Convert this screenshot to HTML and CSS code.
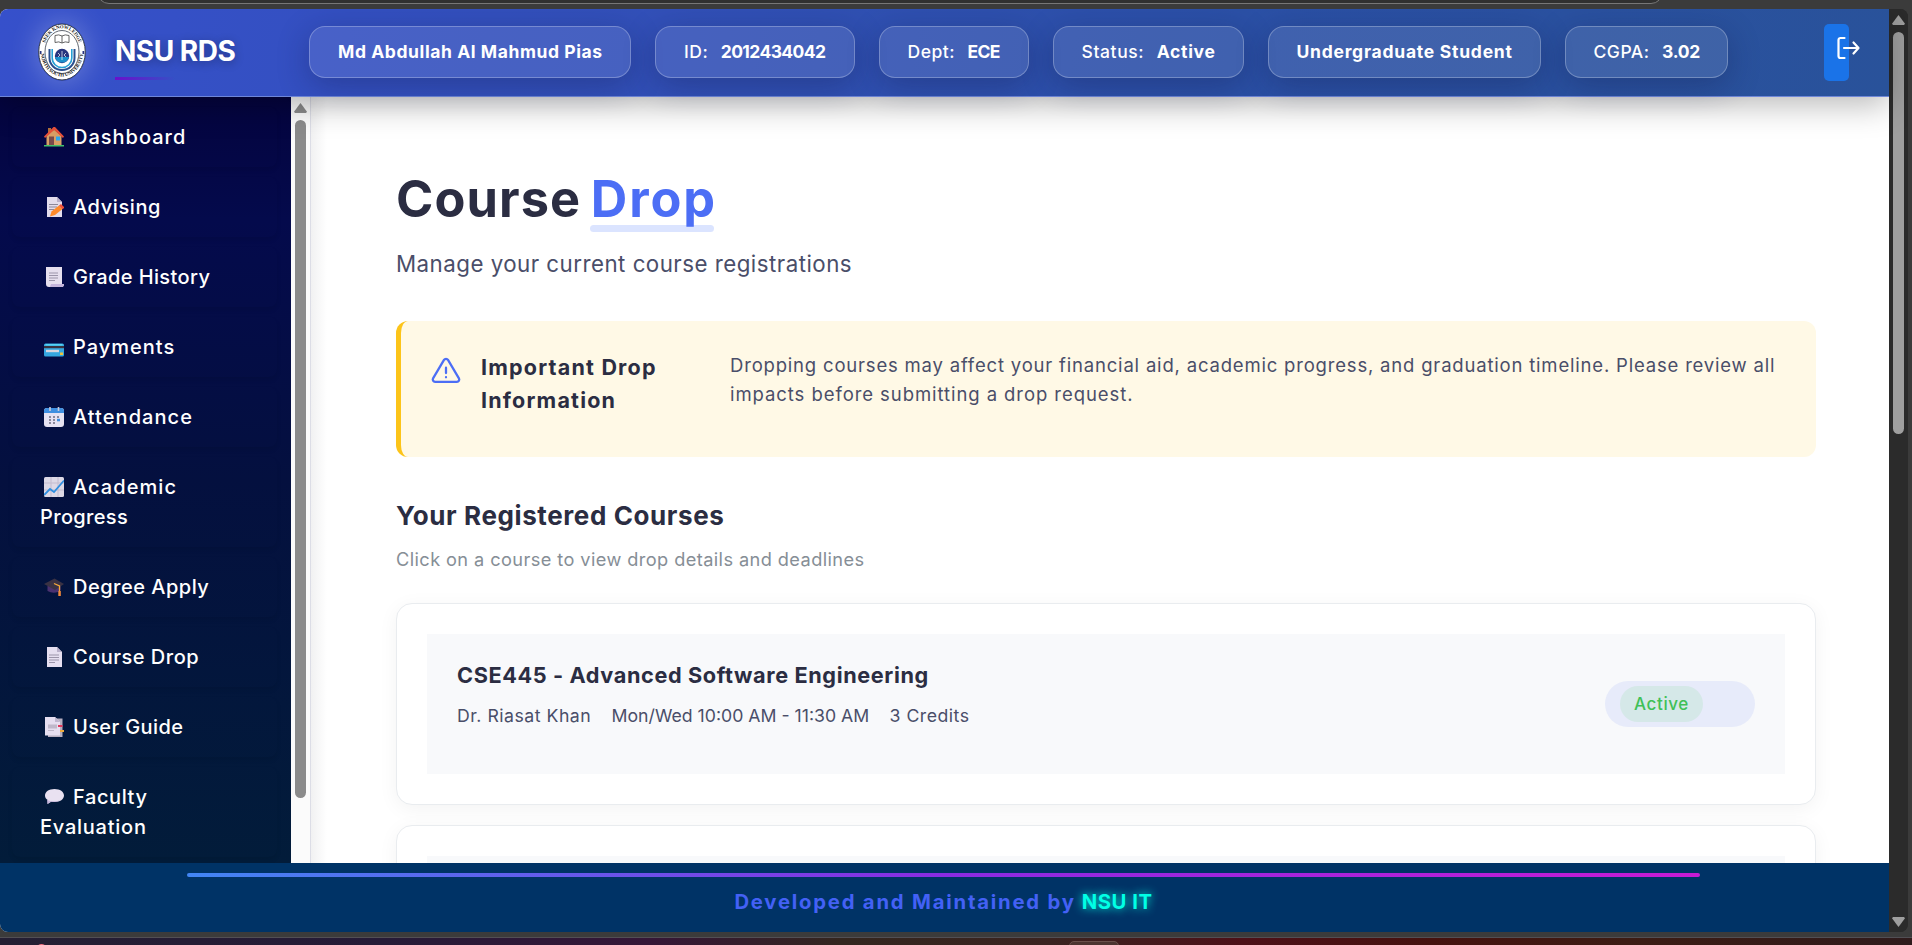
FILE: index.html
```html
<!DOCTYPE html>
<html lang="en">
<head>
<meta charset="utf-8">
<title>NSU RDS - Course Drop</title>
<link rel="stylesheet" href="styles.css">
</head>
<body>
<div class="desktop">
  <div class="chrome-top"><div class="address-bar"></div></div>
  <div class="window">
    <div class="page">
      <header class="topbar">
        <svg class="logo" width="48" height="58" viewBox="0 0 48 58">
          <ellipse cx="24" cy="29" rx="23.3" ry="28" fill="#fff" stroke="#39404d" stroke-width="1"/>
          <ellipse cx="24" cy="29" rx="17" ry="21.5" fill="none" stroke="#39404d" stroke-width=".8"/>
          <path id="arcTop" d="M6 28A18 22.6 0 0 1 42 28" fill="none"/>
          <path id="arcBottom" d="M2.8 31A21.4 26 0 0 0 45.2 31" fill="none"/>
          <text class="seal"><textPath href="#arcTop" startOffset="50%" text-anchor="middle">SEEK KNOWLEDGE</textPath></text>
          <text class="seal"><textPath href="#arcBottom" startOffset="50%" text-anchor="middle">NORTH SOUTH UNIVERSITY</textPath></text>
          <path d="M17 12.500q4-1.500 7 .5 3-2 7-.5v7q-4-1.500-7 .5-3-2-7-.5zM24 13v7" fill="#fff" stroke="#555" stroke-width=".9"/>
          <path d="M11.500 26v9a12.500 12 0 0 0 25 0v-9" fill="none" stroke="#2a4f8f" stroke-width="2"/>
          <path d="M14.200 26v9a9.800 9.500 0 0 0 19.600 0v-9" fill="none" stroke="#27a0d6" stroke-width="1.600"/>
          <circle cx="24" cy="33" r="7.200" fill="#29357f"/>
          <path d="M17 34h14a7.200 7.200 0 0 1-14 0z" fill="#1d8fcb"/>
          <path d="M20 30l2 2-2 2M24 28v9M28 30l-2 2 2 2" stroke="#fff" stroke-width=".7" fill="none"/>
          <path d="M2.600 28v3M45.400 28v3" stroke="#29357f" stroke-width="1.800"/>
        </svg>
        <div class="brand">NSU RDS</div>
        <div class="pills">
          <div class="pill p1"><b>Md Abdullah Al Mahmud Pias</b></div>
          <div class="pill p2"><span>ID:</span><b>2012434042</b></div>
          <div class="pill p3"><span>Dept:</span><b>ECE</b></div>
          <div class="pill p4"><span>Status:</span><b>Active</b></div>
          <div class="pill p5"><b>Undergraduate Student</b></div>
          <div class="pill p6"><span>CGPA:</span><b>3.02</b></div>
        </div>
        <div class="logout">
          <svg width="24" height="24" viewBox="0 0 24 24" fill="none" stroke="#fff" stroke-width="2.200" stroke-linecap="round" stroke-linejoin="round"><path d="M8.500 2H4.500a2 2 0 0 0-2 2v16a2 2 0 0 0 2 2h4M8 12h14M17.500 6.500L22.500 12l-5 5.500"/></svg>
        </div>
      </header>

      <div class="body">
        <nav class="sidebar">
          <a class="item"><svg class="ico" viewBox="0 0 20 20"><path d="M4 1h3v6H4z" fill="#b0703c"/><path d="M2.500 9L10 2.500 17.500 9v9.500h-15z" fill="#d9a066"/><path d="M0 9.500L9.500 0h1.500L20 9.500l-1 1.500L10.200 3 1 11z" fill="#e8503a"/><path d="M5 9.500h5V18H5z" fill="#7a4a4a"/><path d="M12 9.500h4v4h-4z" fill="#2fa8ee"/><path d="M0 18h20v1.500H0z" fill="#43c06a"/></svg><span>Dashboard</span></a>
          <a class="item"><svg class="ico" viewBox="0 0 20 20"><path d="M3 0h10l5 5v15H3z" fill="#e3dcec"/><path d="M13 0l5 5h-5z" fill="#b9b0ca"/><path d="M5 7.500h9M5 10h8M5 12.500h5" stroke="#8d8799"/><path d="M6 19.500l1.500-5L15 8.500l3.500 3.500-7.500 6z" fill="#ff8a2b"/><path d="M15 8.500l2-1.500 3.500 3.500-2 1.800z" fill="#f0503c"/></svg><span>Advising</span></a>
          <a class="item"><svg class="ico" viewBox="0 0 20 20"><path d="M2 0h16v17h2c0 2-1 3-2 3H5c-2 0-3-1-3-3z" fill="#e6dfee"/><path d="M7 17h13c0 2-1 3-2 3H6z" fill="#c5b5dc"/><path d="M5 6h9M5 8.500h9M5 11h9M5 13.500h6" stroke="#9c95aa"/></svg><span>Grade History</span></a>
          <a class="item"><svg class="ico" viewBox="0 0 20 20"><rect y="6.500" width="20" height="13" rx="1.500" fill="#35a7e0"/><path d="M0 9h20v2.200H0z" fill="#3a3340"/><path d="M1.500 7h17v1.500h-17z" fill="#57d3f3"/><path d="M2 12.800h13v2.400H2z" fill="#d8d6de"/><rect x="16" y="15.500" width="3" height="2.500" fill="#f0c23c"/></svg><span>Payments</span></a>
          <a class="item"><svg class="ico" viewBox="0 0 20 20"><rect y="1" width="20" height="19" rx="3" fill="#e6e2f2"/><path d="M0 6V4a3 3 0 0 1 3-3h14a3 3 0 0 1 3 3v2z" fill="#3f8fe0"/><path d="M6 0v4M14.500 0v4" stroke="#c9c9d6" stroke-width="1.600"/><path d="M5 9h2v2H5zM9 9h2v2H9zM13 9h2v2h-2zM5 12h2v2H5zM9 12h2v2H9zM5 15h2v2H5zM9 15h2v2H9z" fill="#8b899c"/><path d="M13 11.800h3v2.500h-3z" fill="#3f8fe0"/></svg><span>Attendance</span></a>
          <a class="item"><svg class="ico" viewBox="0 0 20 20"><rect width="20" height="20" rx="1.500" fill="#ddd9e6"/><path d="M0 6h20M0 13h20M7 0v20M14 0v20" stroke="#c3bccf"/><path d="M0 18l6-6 4 3L20 3.500" fill="none" stroke="#2e8fe0" stroke-width="1.800"/></svg><span>Academic</span> <em>Progress</em></a>
          <a class="item"><svg class="ico" viewBox="0 0 20 20"><path d="M3.500 9v5q5 3 10.500 1l2.500-2V8z" fill="#4a3170"/><path d="M0 7L10.500 1.500 20 7l-9 6z" fill="#3a3244"/><path d="M10 6.500l5.500 2.500v5" fill="none" stroke="#f7a93b" stroke-width="1.300"/><path d="M14.300 14h2.500v5h-2.500z" fill="#f58b3c"/></svg><span>Degree Apply</span></a>
          <a class="item"><svg class="ico" viewBox="0 0 20 20"><path d="M3 0h10l5 5v15H3z" fill="#e6dff0"/><path d="M13 0l5 5h-5z" fill="#b9b0ca"/><path d="M5 8h10M5 10.500h10M5 13h10M5 15.500h6" stroke="#9c95aa"/></svg><span>Course Drop</span></a>
          <a class="item"><svg class="ico" viewBox="0 0 20 20"><path d="M4 1.500h14.500V20H4z" fill="#b7afc0"/><path d="M1 0h10l5 5v13.500H1z" fill="#e6dff0"/><path d="M11 0l5 5h-5z" fill="#c0b7cf"/><path d="M4 7.500h9v4H4zM4 13h6v1H4z" fill="#bfb8ca"/><path d="M14 8h4.500v2H14z" fill="#e2395c"/><path d="M16 13h4v2h-4z" fill="#efab3d"/></svg><span>User Guide</span></a>
          <a class="item"><svg class="ico" viewBox="0 0 20 20"><path d="M10.500 2c5.500 0 9.500 2.800 9.500 6.500S16 15 10.500 15L7 14.800 3.500 17l.5-3.800C2 12.200 1 10.500 1 8.500 1 4.800 5 2 10.500 2z" fill="#e9e1f1"/><path d="M3 12.700c4 2 10 2 14 0-3 2.300-6.500 2.500-10 2.100L3.500 17z" fill="#c7b6dc"/></svg><span>Faculty</span> <em>Evaluation</em></a>
        </nav>
        <div class="side-scroll"><i class="up"></i><i class="thumb"></i></div>
        <main class="content">
          <h1><span class="w1">Course</span> <span class="w2">Drop</span></h1>
          <p class="lead">Manage your current course registrations</p>
          <section class="alert">
            <svg class="warn" width="32" height="32" viewBox="0 0 24 24" fill="none" stroke="#4c6ef5" stroke-width="1.700" stroke-linecap="round" stroke-linejoin="round"><path d="M10.500 3.700L2.300 17.500a1.750 1.750 0 0 0 1.500 2.600h16.400a1.750 1.750 0 0 0 1.500-2.600L13.500 3.700a1.750 1.750 0 0 0-3 0zM12 9.500v4M12 16.600v.1"/></svg>
            <h3>Important Drop<br>Information</h3>
            <p><span class="l1">Dropping courses may affect your financial aid, academic progress, and graduation timeline. Please review all</span><br><span class="l2">impacts before submitting a drop request.</span></p>
          </section>
          <h2>Your Registered Courses</h2>
          <p class="hint">Click on a course to view drop details and deadlines</p>
          <article class="card">
            <div class="course">
              <div class="info">
                <h4>CSE445 - Advanced Software Engineering</h4>
                <div class="meta"><span class="m1">Dr. Riasat Khan</span><span class="m2">Mon/Wed 10:00 AM - 11:30 AM</span><span class="m3">3 Credits</span></div>
              </div>
              <div class="status"><span>Active</span></div>
            </div>
          </article>
          <article class="card"><div class="course"></div></article>
        </main>
      </div>

      <footer class="footer">
        <div class="rule"></div>
        <p><span class="dev">Developed and Maintained by</span><span class="it">NSU IT</span></p>
      </footer>
    </div>
    <div class="page-scroll"><i class="up"></i><i class="thumb"></i><i class="down"></i></div>
  </div>
  <div class="wallpaper"><i class="dot"></i><i class="tab"></i></div>
</div>
</body>
</html>
```

FILE: styles.css
```css
*{box-sizing:border-box}
body{margin:0;font-family:Inter,"Liberation Sans",sans-serif;background:#3b3b3b;overflow:hidden}
h1,h2,h3,h4,p{margin:0}
.desktop{width:1912px;height:945px;display:flex;flex-direction:column;background:#3b3b3b;overflow:hidden}
.chrome-top{height:9px;padding-left:97px;flex:none;overflow:hidden}
.address-bar{width:1566px;height:24px;margin-top:-20px;background:#303030;border:1px solid #777;border-radius:16px}
.window{height:923px;width:1908px;flex:none;display:flex;border-radius:8px;overflow:hidden;background:#2b2b2b}
.page{width:1889px;display:flex;flex-direction:column;background:#fff}

.topbar{position:relative;z-index:2;height:88px;flex:none;display:flex;align-items:flex-start;color:#fff;
  background:linear-gradient(100deg,#3650cb 0%,#3250b8 35%,#2b50a6 65%,#29529a 100%);
  border-bottom:1px solid #6f87d8;box-shadow:0 8px 32px rgba(0,0,0,.28)}
.logo{margin:14px 0 0 38px;flex:none;overflow:visible;border-radius:50%;box-shadow:0 0 28px 2px rgba(255,255,255,.25)}
.seal{font:700 5px "Liberation Serif",serif;fill:#222;letter-spacing:-.1px}
.brand{width:195px;margin:14px 0 0 28px;height:58px;font-size:28px;font-weight:700;padding-left:1px;letter-spacing:-.5px;line-height:56px;
  text-shadow:0 2px 10px rgba(0,0,0,.3);background:linear-gradient(90deg,#6a11cb,rgba(106,17,203,0)) 1px 54px/60px 3px no-repeat}
.pills{display:flex;gap:24px;margin-top:17px}
.pill{height:52px;border:1px solid rgba(255,255,255,.26);border-radius:16px;background:rgba(255,255,255,.1);
  box-shadow:0 8px 32px rgba(20,24,70,.32);display:flex;align-items:center;gap:12.500px;padding:0 0 2px 28px;
  font-size:17.500px;font-weight:500;letter-spacing:.5px;white-space:nowrap;flex:none}
.pill b{font-weight:700}
.p1{width:322px}.p1 b{letter-spacing:.58px}
.p2{width:199.500px}.p2 b{letter-spacing:-.6px}
.p3{width:150px}.p3 b{letter-spacing:-.7px}
.p4{width:191px}.p4 span{letter-spacing:.6px}.p4 b{letter-spacing:.7px}
.p5{width:273px}.p5 b{letter-spacing:.75px}
.p6{width:163px}.p6 b{letter-spacing:-.3px}
.logout{margin:15px 0 0 96px;width:25px;height:57px;border-radius:5px;background:#1a73e8;padding:12px 0 0 12px;overflow:visible}
.logout svg{display:block;overflow:visible}

.body{height:766px;display:flex;flex:none;overflow:hidden}
.sidebar{width:291px;flex:none;padding:10px 14px 0 12px;background:linear-gradient(180deg,#04043f 0,#040a4c 16%,#04103f 50%,#021c3a 100%);
  display:flex;flex-direction:column;gap:10px;overflow:hidden}
.item{display:block;flex:none;padding:15px 28px;font-size:20px;font-weight:500;line-height:30px;letter-spacing:.6px;color:#fff;
  border-radius:8px;box-shadow:0 3px 5px rgba(0,0,0,.08)}
.item em{font-style:normal;display:block}
.item:nth-child(1),.item:nth-child(4){letter-spacing:1px}
.item:nth-child(3),.item:nth-child(9){letter-spacing:.38px}
.item:nth-child(5),.item:nth-child(6){letter-spacing:1.05px}
.item:nth-child(7),.item:nth-child(8){letter-spacing:.5px}
.item:nth-child(6) em{letter-spacing:.35px}
.item:nth-child(10) em{letter-spacing:.75px}
.ico{width:20px;height:20px;margin:0 9px 0 4px;vertical-align:-3px}
.side-scroll,.page-scroll{width:19px;flex:none;display:flex;flex-direction:column;align-items:center;background:#fbfbfb}
.side-scroll i{background:#8b8b8b}
.up{width:13px;height:10px;clip-path:polygon(50% 0,100% 88%,92% 100%,8% 100%,0 88%)}
.down{width:13px;height:10px;clip-path:polygon(50% 100%,100% 12%,92% 0,8% 0,0 12%)}
.side-scroll .up{margin-top:6px}
.side-scroll .thumb{width:11px;height:678px;margin-top:7px;border-radius:6px}
.page-scroll{background:#2b2b2b}
.page-scroll i{background:#9f9f9f}
.page-scroll .up{margin-top:6px}
.page-scroll .thumb{width:11px;height:402px;margin-top:7px;border-radius:6px}
.page-scroll .down{margin-top:auto;margin-bottom:5px}

.content{flex:1;border-left:1px solid #dcdde6;padding:70px 73px 0 85px;background:linear-gradient(90deg,#f1f1f2 0,#fff 16px);color:#2b2d42}
h1{font-size:50.500px;font-weight:700;line-height:64px;height:64px;white-space:nowrap}
.w1{letter-spacing:1.1px}
.w2{display:inline-block;letter-spacing:1.9px;color:#4c6ef5;width:124px;padding-left:1px;margin-left:-3.500px;position:relative;z-index:0}
.w2::after{content:"";position:absolute;z-index:-1;left:0;right:0;bottom:-1px;height:7px;border-radius:4px;background:#dbe4ff}
.lead{margin-top:15px;font-size:22.300px;line-height:36px;letter-spacing:.48px;color:#4a4e69}
.alert{margin-top:39px;height:136px;display:flex;background:#fff9e6;border-left:5px solid #fcc419;border-radius:12px;padding:30px 0 0 29px}
.warn{flex:none;margin:4px 0 0}
.alert h3{width:249px;margin-left:19px;flex:none;font-size:21.500px;font-weight:700;line-height:33px;letter-spacing:1.2px}
.alert p{font-size:18.500px;line-height:29px;letter-spacing:.81px;color:#4a4e69;white-space:nowrap}
.l2{letter-spacing:.93px}
h2{margin-top:39px;font-size:26px;font-weight:700;line-height:40px;letter-spacing:.6px}
.hint{margin-top:9px;font-size:18.200px;line-height:28px;letter-spacing:.41px;color:#868e96}
.card{margin-top:30px;height:202px;border:1px solid #e9ecef;border-radius:16px;background:#fff;padding:30px;box-shadow:0 4px 20px rgba(0,0,0,.05)}
.card+.card{margin-top:20px}
.course{height:140px;background:#f8f9fb;padding:24px 30px 0;display:flex;justify-content:space-between}
h4{font-size:21.700px;font-weight:700;line-height:34px;letter-spacing:.61px}
.meta{display:flex;margin-top:10px;font-size:17.700px;line-height:28px;letter-spacing:.5px;color:#4a4e69;white-space:nowrap}
.m1{width:154.500px}.m2{width:278px;letter-spacing:0}
.status{width:150px;height:46px;margin-top:23px;border-radius:23px;background:#e7ebfa;padding:5px 15px}
.status span{display:block;width:83px;height:36px;border-radius:18px;background:#d5e8e8;color:#40c057;font-size:17px;font-weight:500;line-height:36px;
  text-align:center;letter-spacing:.6px}

.footer{position:relative;z-index:2;height:69px;flex:none;background:#003366;padding:10px 2px 0 0;display:flex;flex-direction:column;align-items:center}
.rule{width:1513px;height:4px;border-radius:2px;background:linear-gradient(90deg,#4286f4,#8a2be2 50%,#c71bd4)}
.footer p{font-size:20.300px;font-weight:700;line-height:50px;white-space:nowrap}
.dev{color:#4361f5;letter-spacing:1.78px}
.it{color:#00ffe5;letter-spacing:.55px;margin-left:6px;text-shadow:0 0 10px #00ffe5}
.wallpaper{margin-top:5px;height:8px;flex:none;position:relative;overflow:hidden;border-top:1px solid #514f54;
  background:linear-gradient(90deg,#241f33 0,#261b37 20%,#351637 34%,#33261f 44%,#3a2320 55%,#4d1018 65%,#45120f 75%,#3c1c14 85%,#2f1b1c 100%)}
.dot{position:absolute;left:36px;top:6px;width:11px;height:11px;border-radius:50%;background:#ee6f80}
.tab{position:absolute;left:1069px;top:3px;width:50px;height:20px;border-radius:5px;border:1px solid #6b504b;background:#4c3430}
```
